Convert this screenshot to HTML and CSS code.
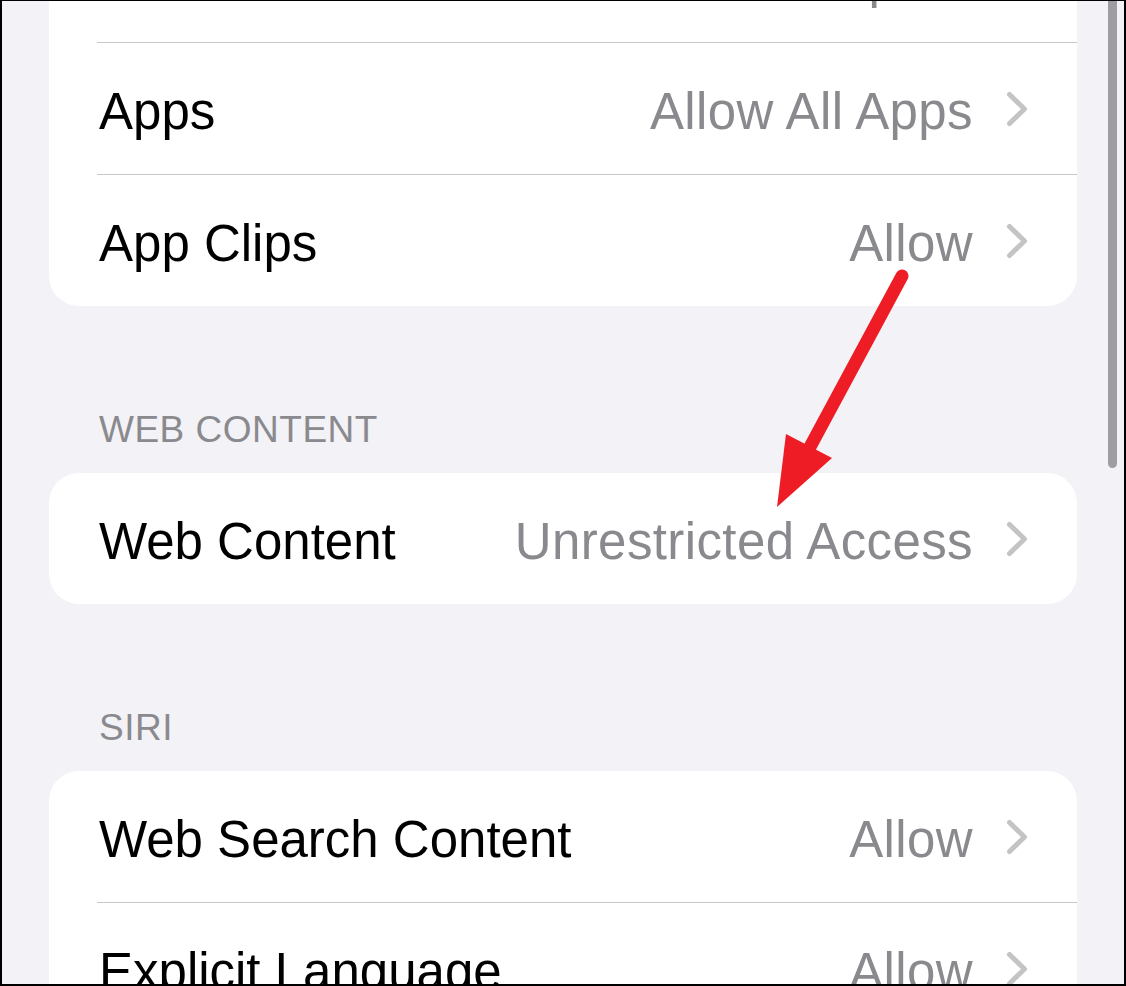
FILE: index.html
```html
<!DOCTYPE html>
<html lang="en">
<head>
<meta charset="utf-8">
<title>Content Restrictions</title>
<link rel="stylesheet" href="styles.css">
</head>
<body>
<div class="frame">
  <div class="content">
    <div class="card card-first">
      <div class="row">
        <span class="label">Books</span>
        <span class="value">Explicit</span>
        <svg class="chev" viewBox="0 0 22 36"><polyline points="3.5,3.5 18.5,18 3.5,32.5"/></svg>
      </div>
      <div class="row">
        <span class="label">Apps</span>
        <span class="value">Allow All Apps</span>
        <svg class="chev" viewBox="0 0 22 36"><polyline points="3.5,3.5 18.5,18 3.5,32.5"/></svg>
      </div>
      <div class="row">
        <span class="label">App Clips</span>
        <span class="value">Allow</span>
        <svg class="chev" viewBox="0 0 22 36"><polyline points="3.5,3.5 18.5,18 3.5,32.5"/></svg>
      </div>
    </div>

    <div class="section-header">WEB CONTENT</div>
    <div class="card">
      <div class="row">
        <span class="label">Web Content</span>
        <span class="value">Unrestricted Access</span>
        <svg class="chev" viewBox="0 0 22 36"><polyline points="3.5,3.5 18.5,18 3.5,32.5"/></svg>
      </div>
    </div>

    <div class="section-header">SIRI</div>
    <div class="card">
      <div class="row">
        <span class="label">Web Search Content</span>
        <span class="value">Allow</span>
        <svg class="chev" viewBox="0 0 22 36"><polyline points="3.5,3.5 18.5,18 3.5,32.5"/></svg>
      </div>
      <div class="row">
        <span class="label">Explicit Language</span>
        <span class="value">Allow</span>
        <svg class="chev" viewBox="0 0 22 36"><polyline points="3.5,3.5 18.5,18 3.5,32.5"/></svg>
      </div>
    </div>
  </div>

  <div class="scrollbar"></div>

  <svg class="annotation" viewBox="0 0 1126 986" width="1126" height="986">
    <line x1="902" y1="276" x2="810" y2="447"/>
    <polygon points="786,434 832,458 777,507"/>
  </svg>
</div>
</body>
</html>
```

FILE: styles.css
```css
html, body {
  margin: 0;
  padding: 0;
}

body {
  font-family: "Liberation Sans", Arial, sans-serif;
  background: #000;
}

.frame {
  position: relative;
  width: 1126px;
  height: 986px;
  box-sizing: border-box;
  border-style: solid;
  border-color: #000;
  border-width: 1px 2px 2px 2px;
  background: #f2f2f7;
  overflow: hidden;
}

.content {
  padding-left: 47px;
  width: 1028px;
}

.card {
  background: #fff;
  border-radius: 30px;
  overflow: hidden;
}

.card-first {
  margin-top: -90px;
}

.row {
  display: flex;
  align-items: center;
  height: 131px;
  padding-left: 50px;
  padding-right: 49px;
  position: relative;
  box-sizing: border-box;
}

.row + .row {
  height: 132px;
  border-top: 1px solid #c8c8cc;
  margin-left: 48px;
  padding-left: 2px;
}

.label {
  font-size: 51px;
  line-height: 51px;
  color: #000;
  flex: 1;
  white-space: nowrap;
  padding-top: 5px;
}

.value {
  font-size: 51px;
  line-height: 51px;
  letter-spacing: 0.4px;
  color: #8a8a8e;
  white-space: nowrap;
  padding-top: 5px;
}

.chev {
  width: 22px;
  height: 36px;
  margin-left: 33px;
  flex: none;
}

.chev polyline {
  fill: none;
  stroke: #c4c4c7;
  stroke-width: 5;
  stroke-linecap: round;
  stroke-linejoin: round;
}

.section-header {
  margin-top: 102px;
  margin-bottom: 21px;
  padding-left: 50px;
  font-size: 37px;
  line-height: 44px;
  letter-spacing: 0.5px;
  color: #8a8a8e;
}

.scrollbar {
  position: absolute;
  left: 1106px;
  top: -20px;
  width: 9px;
  height: 487px;
  border-radius: 5px;
  background: #9e9ea2;
}

.annotation {
  position: absolute;
  left: -2px;
  top: -1px;
  pointer-events: none;
}

.annotation line {
  stroke: #ee1d25;
  stroke-width: 13;
  stroke-linecap: round;
}

.annotation polygon {
  fill: #ee1d25;
}
```
